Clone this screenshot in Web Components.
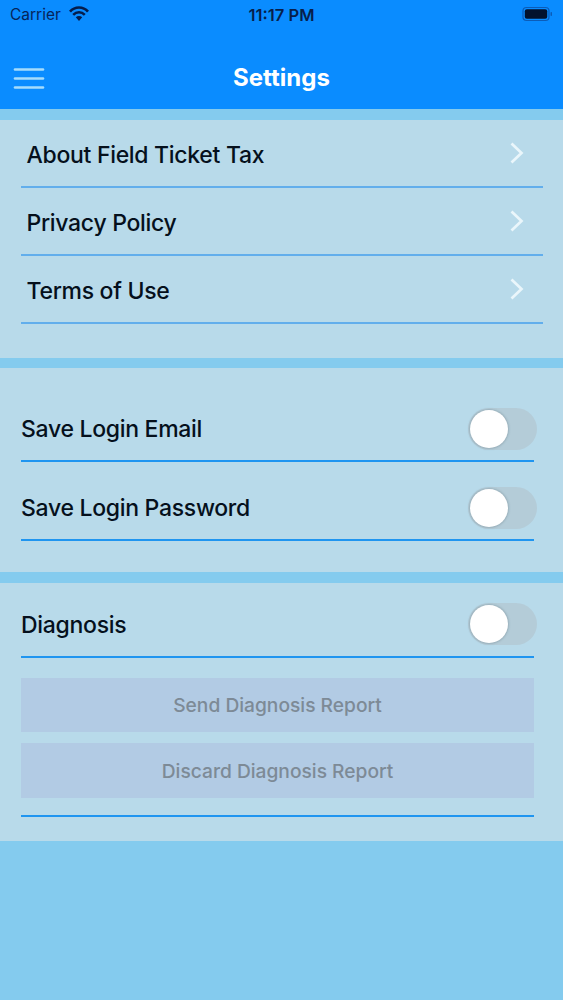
<!doctype html>
<html><head><meta charset="utf-8"><style>
html,body{margin:0;padding:0}
body{width:563px;height:1000px;overflow:hidden;background:#84cbee;font-family:Inter,"Liberation Sans",sans-serif}
</style></head><body>
<settings-app></settings-app>
<template id="t-status"><style>
:host{display:flex;height:30px;align-items:center;justify-content:space-between;padding:0 10px 2px 10px;box-sizing:border-box;color:#04265c;font-size:15.5px;position:relative}
.left{display:flex;align-items:center;gap:8px;color:#06245a}
.time{position:absolute;left:0;right:0;text-align:center;font-weight:600;color:#071f4c;font-size:16.6px;top:5px}
svg{display:block}
</style><div class="left"><span>Carrier</span><svg width="20" height="16" viewBox="0 0 20 16"><path d="M1 5.600C3.300 3 6.400 1.500 10 1.500s6.700 1.500 9 4.100" fill="none" stroke="#051d4c" stroke-width="2.700"/><path d="M4.200 8.900C5.700 7.300 7.700 6.300 10 6.300s4.300 1 5.800 2.600" fill="none" stroke="#051d4c" stroke-width="2.500"/><path d="M6.800 11.200L10 15l3.200-3.800C12.300 10.400 11.200 10 10 10s-2.300.4-3.200 1.200z" fill="#051d4c"/></svg></div><span class="time">11:17 PM</span>
<svg width="31" height="16" viewBox="0 0 31 16"><rect x="1" y="1.500" width="26" height="13" rx="3.500" fill="none" stroke="#0b5cb8" stroke-width="1.200"/><rect x="2.800" y="3.300" width="22.400" height="9.400" rx="2" fill="#02122e"/><rect x="28.500" y="6" width="1.500" height="4" rx=".7" fill="#0b5cb8"/></svg></template>

<template id="t-nav"><style>
:host{display:block;background:#0a8cff;height:109px;box-sizing:border-box}
.bar{height:79px;display:grid;grid-template-columns:1fr auto 1fr;align-items:center;padding:0 13px;box-sizing:border-box}
.t{color:#fff;font-size:24px;font-weight:700;padding-top:16px}
svg{display:block;margin-top:18px}
</style><slot name="status"></slot><div class="bar"><svg width="32" height="24" viewBox="0 0 32 24"><g stroke="#a5dcfc" stroke-width="2.600" stroke-linecap="round"><path d="M2 2.500H30"/><path d="M2 11.500H30"/><path d="M2 20.500H30"/></g></svg><span class="t"><slot></slot></span><span></span></div></template>

<template id="t-section"><style>
:host{display:block;background:#b8daea;box-sizing:border-box}
</style><slot></slot></template>

<template id="t-link"><style>
:host{display:flex;align-items:center;justify-content:space-between;height:68px;margin:0 20px 0 21px;box-sizing:border-box;border-bottom:2px solid #62aeec;padding:3px 18px 0 5.500px;font-size:23px;font-weight:500;color:#05101c;letter-spacing:-.3px}
svg{display:block;margin-bottom:3px}
</style><slot></slot><svg width="16" height="24" viewBox="0 0 16 24"><path d="M2.500 2.500L12.500 12 2.500 21.500" fill="none" stroke="#eaf6fb" stroke-width="2.700"/></svg></template>

<template id="t-toggle"><style>
:host{display:flex;align-items:center;justify-content:space-between;height:79px;margin:0 29px 0 21px;padding-top:15px;box-sizing:border-box;border-bottom:2px solid #1f95f0;font-size:23px;font-weight:500;color:#05101c;letter-spacing:-.3px;position:relative}
:host([compact]){height:75px;padding-top:10px}
.track{width:69px;height:42px;border-radius:21px;background:#b4ccd8;position:absolute;right:-3px;top:calc(50% - 14px)}
:host([compact]) .track{top:calc(50% - 17px)}
.knob{position:absolute;left:2px;top:2px;width:38px;height:38px;border-radius:50%;background:#fff;box-shadow:0 0 2px 1px rgba(70,90,100,.25)}
</style><slot></slot><span class="track"><span class="knob"></span></span></template>

<template id="t-button"><style>
:host{display:flex;align-items:center;justify-content:center;height:54px;margin:0 29px 0 21px;background:#b2cbe4;color:#7d8a96;font-size:19.2px;font-weight:500}
:host(:last-child){height:55px}
</style><slot></slot></template>

<template id="t-app"><style>
:host{display:flex;flex-direction:column;height:1000px}
.s1{margin-top:11px;padding-bottom:34px}
.s2{margin-top:10px;padding:15px 0 31px}
.s3{margin-top:11px;padding:0 0 24px}
.btns{display:flex;flex-direction:column;gap:11px;padding-top:20px}
hr{border:0;height:2px;background:#1f95f0;margin:17px 29px 0 21px}
</style>
<nav-bar><status-bar slot="status"></status-bar>Settings</nav-bar>
<settings-section class="s1"><link-row>About Field Ticket Tax</link-row><link-row>Privacy Policy</link-row><link-row>Terms of Use</link-row></settings-section>
<settings-section class="s2"><toggle-row>Save Login Email</toggle-row><toggle-row>Save Login Password</toggle-row></settings-section>
<settings-section class="s3"><toggle-row compact>Diagnosis</toggle-row><div class="btns"><action-button>Send Diagnosis Report</action-button><action-button>Discard Diagnosis Report</action-button></div><hr></settings-section>
</template>
<script>
for(const [n,t] of [['status-bar','t-status'],['nav-bar','t-nav'],['settings-section','t-section'],['link-row','t-link'],['toggle-row','t-toggle'],['action-button','t-button'],['settings-app','t-app']]){
customElements.define(n,class extends HTMLElement{constructor(){super();this.attachShadow({mode:'open'}).append(document.getElementById(t).content.cloneNode(true))}})}
</script>
</body></html>
